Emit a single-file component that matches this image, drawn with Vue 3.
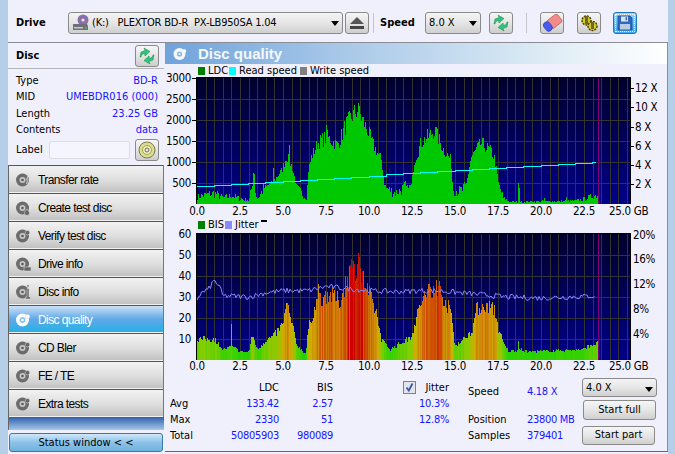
<template>
  <div class="window">
    <header class="toolbar">
      <span class="tool-label drive-label">Drive</span>
      <div class="combo drive-combo">
        <svg class="drive-icon" width="18" height="18" viewBox="0 0 18 18">
          <circle cx="11" cy="6" r="5.500" fill="#8a6fa8" />
          <circle cx="11" cy="6" r="1.600" fill="#e8e0f0" />
          <path d="M1 10h14l1 2v4H1v-4z" fill="#6f7078" />
          <rect x="2" y="13" width="9" height="1.500" fill="#c8c8d0" />
          <rect x="13" y="13" width="2" height="1.500" fill="#30d040" />
        </svg>
        <span class="combo-text drive-text">(K:)&nbsp;&nbsp;&nbsp;PLEXTOR BD-R&nbsp;&nbsp;PX-LB950SA 1.04</span>
        <i class="arrow"></i>
      </div>
      <button class="tool-btn eject">
        <svg width="16" height="14" viewBox="0 0 16 14">
          <path d="M8 1l7 7H1z" fill="#555" />
          <rect x="1" y="10" width="14" height="3" fill="#444" />
        </svg>
      </button>
      <span class="divider"></span>
      <span class="tool-label speed-label">Speed</span>
      <div class="combo speed-combo">
        <span class="combo-text">8.0 X</span>
        <i class="arrow"></i>
      </div>
      <button class="tool-btn refresh">
        <svg width="20" height="18" viewBox="0 0 18 18">
          <path :d="arrowsPath" fill="#2fc47a" stroke="#1a8a50" stroke-width=".5" />
        </svg>
      </button>
      <span class="divider second"></span>
      <button class="tool-btn erase">
        <svg width="21" height="19" viewBox="0 0 21 19">
          <g transform="rotate(-38 10.500 9.500)">
            <rect x="7" y="4" width="13" height="10" rx="2" fill="#f28a8a" stroke="#c05858" stroke-width=".7" />
            <rect x="1.500" y="4" width="7" height="10" rx="3.500" fill="#4a5cf0" stroke="#2a3ab0" stroke-width=".7" />
          </g>
        </svg>
      </button>
      <button class="tool-btn gears">
        <svg width="20" height="18" viewBox="0 0 20 18">
          <circle cx="7.500" cy="6.500" r="4.500" fill="#d8c820" stroke="#4a4400" stroke-width="1.500" stroke-dasharray="2 1" />
          <circle cx="13.500" cy="12" r="4.500" fill="#d8c820" stroke="#4a4400" stroke-width="1.500" stroke-dasharray="2 1" />
          <rect x="6" y="2" width="3" height="8" fill="#6a6a30" />
          <rect x="12" y="8" width="3" height="7" fill="#6a6a30" />
        </svg>
      </button>
      <button class="tool-btn save">
        <svg width="16" height="16" viewBox="0 0 16 16">
          <path d="M1 1h12l2 2v12H1z" fill="#2f68c0" stroke="#1c4f94" stroke-width=".8" />
          <rect x="4" y="1.500" width="7" height="5" fill="#dbe6f4" />
          <rect x="8.500" y="2.200" width="1.500" height="3" fill="#2f68c0" />
          <rect x="3" y="9" width="10" height="5.500" fill="#b9cce4" />
        </svg>
      </button>
    </header>

    <div class="body">
      <aside class="side">
        <div class="disc-head">
          <b>Disc</b>
          <button class="tool-btn mini">
            <svg width="20" height="18" viewBox="0 0 18 18">
              <path :d="arrowsPath" fill="#2fc47a" stroke="#1a8a50" stroke-width=".5" />
            </svg>
          </button>
        </div>
        <dl class="disc-info">
          <div v-for="row in discRows" :key="row.label" class="info-row">
            <dt>{{ row.label }}</dt>
            <dd>{{ row.value }}</dd>
          </div>
        </dl>
        <div class="label-row">
          <span>Label</span>
          <div class="label-input"></div>
          <button class="tool-btn mini">
            <svg width="18" height="18" viewBox="0 0 18 18">
              <circle cx="9" cy="9" r="8" fill="#dcdc90" stroke="#7a7a50" />
              <circle cx="9" cy="9" r="4.500" fill="#f0f0b8" stroke="#a0a060" />
              <circle cx="9" cy="9" r="2" fill="#e8e8e8" stroke="#707050" />
            </svg>
          </button>
        </div>

        <nav class="tests">
          <button v-for="item in tests" :key="item.name" class="test" :class="{ active: item.active }">
            <svg width="16" height="16" viewBox="0 0 16 16">
              <circle cx="7.500" cy="8" r="6.500" :fill="item.active ? '#fff' : '#6c6c6c'" />
              <circle cx="7.500" cy="8" r="3" :fill="item.active ? '#8fc6ee' : '#c8c8c8'" />
              <circle cx="7.500" cy="8" r="1.300" :fill="item.active ? '#fff' : '#5a5a5a'" />
              <path :d="item.accent" :fill="item.active ? '#fff' : '#666'" stroke="#d8d8d8" stroke-width=".6" />
            </svg>
            <span>{{ item.name }}</span>
          </button>
        </nav>
        <div class="blue-bar"></div>
        <div class="status-wrap">
          <button class="status">Status window &lt; &lt;</button>
        </div>
      </aside>

      <main class="panel">
        <div class="title">
          <svg width="14" height="14" viewBox="0 0 14 14">
            <circle cx="6.500" cy="7" r="6" fill="#f4f8fc" />
            <circle cx="6.500" cy="7" r="2.600" fill="#8fb6dc" />
            <circle cx="6.500" cy="7" r="1.100" fill="#fff" />
            <circle cx="11.500" cy="4" r="1.800" fill="#fff" />
          </svg>
          <span>Disc quality</span>
        </div>

        <div class="legend">
          <i class="swatch ldc"></i><span class="tight">LDC</span>
          <i class="swatch read"></i><span>Read speed</span>
          <i class="swatch write"></i><span>Write speed</span>
        </div>
        <svg class="chart top-chart" viewBox="165 77 502 141" width="502" height="141">
          <defs>
            <linearGradient id="plotBg" x1="0" y1="0" x2="0" y2="1">
              <stop offset="0" stop-color="#00002c" />
              <stop offset="1" stop-color="#000088" />
            </linearGradient>
          </defs>
          <rect x="196" y="77" width="434" height="127" fill="url(#plotBg)" />
          <path :d="topGrid" class="grid" />
          <path :d="ldcPath" class="ldc-bars" />
          <path d="M598.500 78V204" class="end-mark" />
          <polyline :points="readSpeed" class="read-line" />
          <path d="M196.500 204V77.500H630.500V204M630 88.500h4M630 107.500h4M630 127.500h4M630 146.500h4M630 165.500h4M630 184.500h4M192 78.500h4M192 99.500h4M192 120.500h4M192 141.500h4M192 162.500h4M192 183.500h4" class="frame" />
          <text v-for="t in ldcTicks" :key="t.label" x="191" :y="t.y" class="tick-text" text-anchor="end">{{ t.label }}</text>
          <text v-for="t in speedTicks" :key="t.label" x="635" :y="t.y" class="tick-text">{{ t.label }}</text>
          <text v-for="t in gbTicks" :key="t.label" :x="t.x" y="215" class="tick-text" text-anchor="middle">{{ t.label }}</text>
          <text x="609" y="215" class="tick-text">25.0 GB</text>
        </svg>

        <div class="legend second-legend">
          <i class="swatch ldc"></i><span class="tight">BIS</span>
          <i class="swatch jitter"></i><span>Jitter</span>
          <i class="dash"></i>
        </div>
        <svg class="chart" viewBox="165 232 502 140" width="502" height="140">
          <rect x="196" y="233" width="434" height="127" fill="url(#plotBg)" />
          <path :d="bottomGrid" class="grid" />
          <rect v-for="bar in bisBars" :key="bar.x" :x="bar.x" :y="bar.y" width="1" :height="360 - bar.y" :fill="bar.color" shape-rendering="crispEdges" />
          <path d="M598.500 234V360" class="end-mark" />
          <polyline :points="jitterLine" class="jitter-line" />
          <path d="M196.500 360V233.500H630.500V360" class="frame" />
          <text v-for="t in bisTicks" :key="t.label" x="191" :y="t.y" class="tick-text" text-anchor="end">{{ t.label }}</text>
          <text v-for="t in pctTicks" :key="t.label" x="633" :y="t.y" class="tick-text">{{ t.label }}</text>
          <text v-for="t in gbTicks" :key="t.label" :x="t.x" y="370" class="tick-text" text-anchor="middle">{{ t.label }}</text>
          <text x="609" y="370" class="tick-text">25.0 GB</text>
        </svg>

        <section class="stats">
          <div class="table">
            <span></span><span class="head">LDC</span><span class="head">BIS</span>
            <span>Avg</span><b>133.42</b><b>2.57</b>
            <span>Max</span><b>2330</b><b>51</b>
            <span class="total">Total</span><b>50805903</b><b>980089</b>
          </div>
          <div class="jitter-col">
            <div class="jitter-head">
              <span class="check">
                <svg width="11" height="11" viewBox="0 0 11 11">
                  <path d="M2.500 5.500l2.300 3 3.700-7" fill="none" stroke="#3c5a9c" stroke-width="1.800" />
                </svg>
              </span>
              <span>Jitter</span>
            </div>
            <b>10.3%</b>
            <b>12.8%</b>
          </div>
          <div class="run-col">
            <div class="run-row first"><span>Speed</span><b>4.18 X</b></div>
            <div class="run-row"><span>Position</span><b>23800 MB</b></div>
            <div class="run-row"><span>Samples</span><b>379401</b></div>
          </div>
          <div class="actions">
            <div class="combo run-combo">
              <span class="combo-text">4.0 X</span>
              <i class="arrow"></i>
            </div>
            <button class="action">Start full</button>
            <button class="action part">Start part</button>
          </div>
        </section>
      </main>
    </div>
  </div>
</template>

<script setup>
const discRows = [
  { label: 'Type', value: 'BD-R' },
  { label: 'MID', value: 'UMEBDR016 (000)' },
  { label: 'Length', value: '23.25 GB' },
  { label: 'Contents', value: 'data' },
]

// small marks that sit on the disc icon of each test
const wheel = 'M12.500 2.500a2.200 2.200 0 1 0 .01 0z'
const tests = [
  { name: 'Transfer rate', accent: 'M14 2l-2 5h1.500l-2 5 .8-4h-1.300z' },
  { name: 'Create test disc', accent: 'M12 9c1.500 2 2.500 3 2.500 4a2.500 2.500 0 0 1-5 0c0-1 1-2 2.500-4z' },
  { name: 'Verify test disc', accent: wheel },
  { name: 'Drive info', accent: 'M9 11h7v4H9z' },
  { name: 'Disc info', accent: 'M12 1h2v2h-2zM12 4.500h2V13h1.500v2h-5v-2H12z' },
  { name: 'Disc quality', accent: wheel, active: true },
  { name: 'CD Bler', accent: wheel },
  { name: 'FE / TE', accent: wheel },
  { name: 'Extra tests', accent: wheel },
]

const arrowsPath = 'M2 10l1-5 4-1.500-1-2.500 6 3.500-5 4.500-.5-2.500-2.500 1-1 2.500zM16 8l-1 5-4 1.500 1 2.500-6-3.500 5-4.500.5 2.500 2.500-1 1-2.500z'

// chart geometry, all in page pixels
const xAt = gb => 197 + 17.2 * gb
const ldcY = v => 204 - v * 0.042
const bisY = v => 360 - v * 2.1

let seed = 7
const rand = () => {
  seed = (seed * 16807) % 2147483647
  return seed / 2147483647
}

const interp = (pts, gb) => {
  for (let i = 1; i < pts.length; i++) {
    if (gb <= pts[i][0]) {
      const [x0, y0] = pts[i - 1]
      const [x1, y1] = pts[i]
      return y0 + ((gb - x0) / (x1 - x0)) * (y1 - y0)
    }
  }
  return pts[pts.length - 1][1]
}

const ldcShape = [[0, 170], [0.5, 220], [1, 260], [1.5, 150], [2, 200], [2.5, 130], [3, 90], [3.2, 480], [3.5, 130], [3.9, 400], [4.4, 520], [4.9, 800], [5.2, 1150], [5.5, 900], [5.8, 350], [6.2, 200], [6.35, 160], [6.45, 800], [6.65, 1150], [7, 1450], [7.5, 1600], [8.15, 1400], [8.65, 1900], [9.3, 2250], [9.9, 1750], [10.3, 1350], [10.7, 1050], [10.9, 400], [11.5, 260], [12, 380], [12.45, 450], [12.6, 1000], [13, 1450], [13.8, 1750], [14.3, 1300], [14.75, 1050], [14.85, 380], [15.2, 300], [15.6, 380], [15.9, 1100], [16.5, 1450], [17.1, 1250], [17.3, 1050], [17.5, 500], [17.8, 130], [18.2, 50], [20, 60], [22, 70], [22.7, 150], [23.25, 230]]
const ldcSpikes = { 253: 740, 254: 720, 273: 850, 289: 1400, 326: 1880, 359: 2330, 436: 1830, 518: 500, 519: 380, 544: 150, 566: 170 }

const bisShape = [[0, 10], [1, 10], [1.5, 5], [2, 6.5], [2.5, 4], [3, 4], [3.2, 12], [3.5, 5], [3.9, 9], [4.5, 12], [4.95, 17], [5.2, 27], [5.5, 17], [5.8, 7], [6.3, 3], [6.45, 15], [6.65, 21], [7, 29], [7.6, 32], [8.3, 28], [8.6, 37], [9.3, 46], [9.9, 33], [10.4, 23], [10.7, 10], [11.2, 5], [12, 9], [12.4, 11], [12.7, 19], [13, 28], [13.5, 34], [13.9, 37], [14.5, 27], [14.8, 21], [14.95, 7], [15.5, 10], [16, 15], [16.2, 24], [16.7, 27], [17.3, 24], [17.5, 15], [17.8, 8], [18.1, 4], [18.8, 5], [19.2, 4], [22.4, 5], [22.8, 7], [23.3, 8]]
const bisSpikes = { 231: 17, 318: 36, 349: 45, 351: 48, 358: 51, 359: 49, 436: 38, 430: 35, 486: 27, 518: 9 }

const ldcPath = (() => {
  let d = ''
  for (let x = 197; x <= 598; x++) {
    const base = interp(ldcShape, (x - 197) / 17.2)
    const spread = base < 400 ? 0.9 : 0.24
    const v = ldcSpikes[x] ?? base * (1 - spread / 2 + rand() * spread)
    d += `M${x + 0.5} ${ldcY(v).toFixed(1)}V204`
  }
  return d
})()

const stops = [[3, [30, 210, 0]], [10, [130, 205, 0]], [18, [205, 175, 0]], [27, [208, 125, 10]], [35, [205, 70, 0]], [40, [205, 0, 0]]]
const bisColor = v => {
  const i = stops.findIndex(s => v <= s[0])
  if (i <= 0) return `rgb(${(i === 0 ? stops[0] : stops[5])[1].join(',')})`
  const t = (v - stops[i - 1][0]) / (stops[i][0] - stops[i - 1][0])
  const c = stops[i][1].map((n, k) => Math.round(stops[i - 1][1][k] + (n - stops[i - 1][1][k]) * t))
  return `rgb(${c.join(',')})`
}

const bisBars = []
for (let x = 197; x <= 598; x++) {
  const base = interp(bisShape, (x - 197) / 17.2)
  const v = bisSpikes[x] ?? Math.max(2.5, base * (0.84 + rand() * 0.3))
  bisBars.push({ x, y: Math.round(bisY(v)), color: bisColor(base * (0.8 + rand() * 0.3)) })
}

const readSpeed = (() => {
  const pts = []
  for (let step = 0; step < 24; step++) {
    const x0 = Math.min(197 + step * 17.2, 598)
    const x1 = Math.min(x0 + 17.2, 596)
    const y = Math.round(186 - step * 1.05) + 0.5
    pts.push(`${x0.toFixed(1)},${y}`, `${x1.toFixed(1)},${y}`)
  }
  return pts.join(' ')
})()

const jitterShape = [[0, 29], [0.2, 31.5], [0.7, 34], [1, 38], [1.3, 35], [1.5, 30.5], [2, 30.5], [3, 30], [4, 32], [5, 33], [6.5, 33], [7.5, 35], [10, 33], [11.5, 32.5], [13, 33], [14, 33], [16, 31.5], [18, 30], [20, 29.5], [21.5, 30], [23, 30.5]]
const jitterLine = (() => {
  const pts = []
  for (let x = 197; x <= 595; x += 1.5) {
    const v = interp(jitterShape, (x - 197) / 17.2) + (rand() - 0.5) * 2.6
    pts.push(`${x.toFixed(1)},${bisY(v).toFixed(1)}`)
  }
  return pts.join(' ')
})()

const vGrid = (y0, y1) => {
  let d = ''
  for (let i = 1; i <= 50; i++) d += `M${Math.round(xAt(i / 2)) + 0.5} ${y0}V${y1}`
  return d
}
const hGrid = ys => ys.map(y => `M197 ${y}H630`).join('')
const topGrid = vGrid(78, 204) + hGrid([99.5, 120.5, 141.5, 162.5, 183.5])
const bottomGrid = vGrid(234, 360) + hGrid([255.5, 276.5, 297.5, 318.5, 339.5])

const ldcTicks = [3000, 2500, 2000, 1500, 1000, 500].map((v, i) => ({ label: String(v), y: 82 + i * 21 }))
const speedTicks = [['12 X', 92], ['10 X', 111], ['8 X', 131], ['6 X', 150], ['4 X', 169], ['2 X', 188]].map(([label, y]) => ({ label, y }))
const bisTicks = [60, 50, 40, 30, 20, 10].map((v, i) => ({ label: String(v), y: 238 + i * 21 }))
const pctTicks = [['20%', 239], ['16%', 263], ['12%', 288], ['8%', 313], ['4%', 338]].map(([label, y]) => ({ label, y }))
const gbTicks = ['0.0', '2.5', '5.0', '7.5', '10.0', '12.5', '15.0', '17.5', '20.0', '22.5']
  .map((label, i) => ({ label, x: xAt(i * 2.5) }))
</script>

<style scoped>
.window {
  width: 675px;
  height: 454px;
  overflow: hidden;
  display: flex;
  flex-direction: column;
  background: #f0f0fd;
  font: 11px/14px "DejaVu Sans Condensed", "DejaVu Sans", sans-serif;
  font-stretch: condensed;
  color: #000;
  box-sizing: border-box;
  border-left: 8px solid #b5cfe9;
  border-right: 7px solid #b5cfe9;
}
.toolbar {
  height: 43px;
  flex: none;
  display: flex;
  align-items: center;
  box-sizing: border-box;
  padding: 4px 0 0 8px;
  border-bottom: 1px solid #8c8c94;
}
.tool-label {
  font-weight: bold;
}
.drive-label {
  width: 52px;
}
.speed-label {
  width: 45px;
}
.combo {
  height: 22px;
  box-sizing: border-box;
  display: flex;
  align-items: center;
  border: 1px solid #8a8a8a;
  border-radius: 3px;
  background: linear-gradient(#f4f4f4, #e6e6e6 50%, #cfcfcf);
  padding-left: 3px;
  position: relative;
}
.drive-combo {
  width: 275px;
}
.drive-icon {
  margin-right: 2px;
}
.drive-text {
  letter-spacing: -.2px;
}
.speed-combo {
  width: 56px;
  margin-right: 8px;
}
.combo-text {
  white-space: nowrap;
}
.arrow {
  position: absolute;
  right: 3px;
  top: 8px;
  border: 4px solid transparent;
  border-top: 5px solid #000;
  border-bottom: 0;
}
.tool-btn {
  width: 24px;
  height: 22px;
  padding: 0;
  flex: none;
  display: flex;
  align-items: center;
  justify-content: center;
  border: 1px solid #8a8a8a;
  border-radius: 3px;
  background: linear-gradient(#f6f6f6, #e4e4e4 50%, #cdcdcd);
}
.eject {
  margin-left: 2px;
}
.divider {
  width: 1px;
  height: 20px;
  margin: 0 6px 0 4px;
  background: #c4c4cc;
}
.divider.second {
  margin: 0 13px;
}
.gears {
  margin: 0 12px 0 13px;
}
.save {
  background: linear-gradient(#8fd6ff, #3ea8ec);
  border-color: #1c78b8;
  outline: 1px dotted #fff;
  outline-offset: -3px;
}
.body {
  flex: 1;
  display: flex;
  min-height: 0;
}
.side {
  width: 156px;
  flex: none;
  display: flex;
  flex-direction: column;
  margin-right: 1px;
}
.disc-head {
  height: 25px;
  flex: none;
  display: flex;
  align-items: center;
  justify-content: space-between;
  padding: 0 5px 0 8px;
  border-bottom: 1px solid #b4b4bc;
}
.mini {
  width: 24px;
  height: 22px;
}
.disc-info {
  margin: 4px 0 0;
}
.info-row {
  display: flex;
  justify-content: space-between;
  height: 16.300px;
  align-items: center;
  padding: 0 6px 0 8px;
}
.info-row dd {
  margin: 0;
  color: #1414ff;
}
.label-row {
  display: flex;
  align-items: center;
  height: 24px;
  flex: none;
  padding-left: 8px;
}
.label-row span {
  width: 33px;
  flex: none;
}
.label-input {
  width: 81px;
  height: 18px;
  box-sizing: border-box;
  background: #f5f5fe;
  border: 1px solid #dcdce4;
  border-radius: 2px;
  margin-right: 5px;
}
.tests {
  display: flex;
  flex-direction: column;
  flex: none;
  margin-top: 3px;
  border-left: 1px solid #666;
  border-right: 1px solid #777;
}
.test {
  height: 28px;
  flex: none;
  padding: 2px 0 0 6px;
  display: flex;
  align-items: center;
  gap: 7px;
  border: 0;
  border-top: 1px solid #555;
  border-bottom: 1px solid #f0f0f0;
  background: linear-gradient(#f2f2f2, #dedede 55%, #c2c2c2);
  font: 12px/14px "Liberation Sans", Arial, sans-serif;
  letter-spacing: -.6px;
  text-align: left;
}
.test.active {
  background: linear-gradient(#cbe2f8, #62a8e6 50%, #25b2e6);
  color: #fff;
}
.blue-bar {
  height: 13px;
  flex: none;
  background: linear-gradient(#2d60ac, #a8c8e8);
  border-left: 1px solid #666;
}
.status-wrap {
  padding: 3px 1px 0;
}
.status {
  width: 100%;
  height: 19px;
  padding: 0;
  border: 1px solid #3a7aa8;
  border-radius: 3px;
  background: linear-gradient(#cfe8fa, #8cc2e8 50%, #6fb0dc);
  font: inherit;
  font-stretch: condensed;
  color: #000;
}
.panel {
  flex: 1;
  min-width: 0;
  display: flex;
  flex-direction: column;
  border-bottom: 1px solid #66666e;
  margin-bottom: 2px;
  border-right: 1px solid #8c8c94;
}
.title {
  height: 21px;
  flex: none;
  display: flex;
  align-items: center;
  gap: 11px;
  padding-left: 8px;
  background: linear-gradient(90deg, #6fa3da, #a8c8e8 35%, #d8e8f4 72%, #fff);
  color: #f4f8fc;
  font: bold 15px "Liberation Sans", Arial, sans-serif;
}
.legend {
  height: 13px;
  flex: none;
  display: flex;
  align-items: center;
  padding-left: 33px;
  white-space: nowrap;
}
.second-legend {
  height: 14px;
  position: relative;
}
.swatch {
  width: 7px;
  height: 8px;
  margin-right: 3px;
}
.legend span {
  margin-right: 3px;
}
.legend .tight {
  margin-right: 1px;
}
.ldc { background: #008000; }
.read { background: #00ffff; }
.write { background: #808080; }
.jitter { background: #8888ff; }
.dash {
  position: absolute;
  left: 96px;
  top: 2px;
  width: 6px;
  height: 2px;
  background: #000;
}
.chart {
  display: block;
  flex: none;
  overflow: visible;
}
.grid {
  fill: none;
  stroke: #333330;
  stroke-width: 1;
  shape-rendering: crispEdges;
}
.ldc-bars {
  stroke: #00c800;
  stroke-width: 1;
  fill: none;
  shape-rendering: crispEdges;
}
.end-mark {
  stroke: #800080;
  stroke-width: 1;
  fill: none;
}
.read-line {
  fill: none;
  stroke: #00ffff;
  stroke-width: 1;
  shape-rendering: crispEdges;
}
.jitter-line {
  fill: none;
  stroke: #8888ff;
  stroke-width: 1;
}
.frame {
  fill: none;
  stroke: #000;
  stroke-width: 1;
  shape-rendering: crispEdges;
}
.tick-text {
  font: 11.500px "DejaVu Sans Condensed", "DejaVu Sans", sans-serif;
  font-stretch: condensed;
  letter-spacing: -.3px;
  fill: #000;
}
.stats {
  flex: 1;
  min-height: 0;
  display: flex;
}
.stats b {
  font-weight: normal;
  color: #1414ff;
  letter-spacing: -.3px;
}
.table {
  width: 167px;
  margin: 8px 0 0 3px;
  display: grid;
  grid-template-columns: 50px 61px 54px;
  grid-auto-rows: 16px;
  align-items: center;
  justify-items: end;
}
.table span:nth-child(3n + 1) {
  justify-self: start;
  padding-left: 2px;
}
.table .total {
  padding-left: 0;
}
.jitter-col {
  width: 114px;
  margin-top: 8px;
  display: grid;
  grid-auto-rows: 16px;
  align-items: center;
  justify-items: end;
}
.jitter-head {
  display: flex;
  align-items: center;
  gap: 9px;
}
.check {
  width: 11px;
  height: 11px;
  border: 1px solid #80808c;
  background: #e4e4ec;
  display: block;
  margin-top: -2px;
}
.run-col {
  width: 114px;
  margin: 12px 0 0 19px;
  flex: none;
}
.run-row {
  display: flex;
  height: 16px;
  align-items: center;
}
.run-row.first {
  margin-bottom: 12px;
}
.run-row span {
  width: 59px;
}
.actions {
  width: 76px;
  margin-top: 6px;
  display: flex;
  flex-direction: column;
}
.run-combo {
  width: 75px;
  height: 21px;
  margin-bottom: 3px;
}
.action {
  width: 73px;
  height: 21px;
  margin: 0 0 6px 1px;
  padding: 0;
  border: 1px solid #8a8a8a;
  border-radius: 3px;
  background: linear-gradient(#f6f6f6, #e6e6e6 50%, #cfcfcf);
  font: inherit;
  font-stretch: condensed;
}
.part {
  margin-left: 0;
}
</style>
